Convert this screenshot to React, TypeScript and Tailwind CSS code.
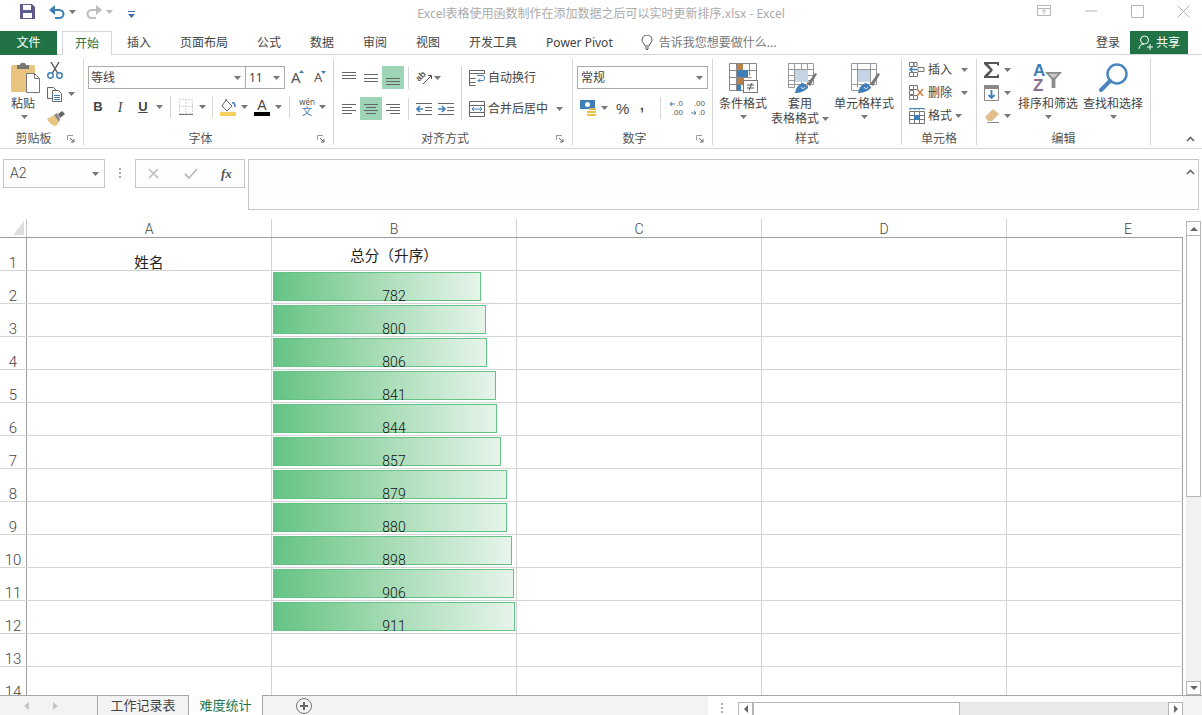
const scores = [782, 800, 806, 841, 844, 857, 879, 880, 898, 906, 911];
const rows = Array.from({ length: 14 }, (_, i) => i + 1);

function Caret({ className = "" }: { className?: string }) {
  return (
    <svg className={`shrink-0 ${className}`} width="7" height="4" viewBox="0 0 7 4">
      <path d="M0 0h7L3.5 4z" fill="#777" />
    </svg>
  );
}

function Launcher() {
  return (
    <svg width="8" height="8" viewBox="0 0 8 8" fill="none">
      <path d="M.5 5V.5H6" stroke="#999" />
      <path d="M3 3l4 4M7 4v3H4" stroke="#666" />
    </svg>
  );
}

function Sep({ className = "h-[22px]" }: { className?: string }) {
  return <div className={`w-px shrink-0 bg-[#d6d6d6] ${className}`} />;
}

function Group({
  w,
  label,
  launcher,
  children,
}: {
  w: string;
  label: string;
  launcher?: boolean;
  children: React.ReactNode;
}) {
  return (
    <div className={`${w} flex h-[86px] shrink-0 flex-col border-r border-[#d6d6d6]`}>
      <div className="h-[74px]">{children}</div>
      <div className="flex h-[12px] items-center">
        <span className="flex-1 text-center text-xs leading-none text-[#555]">{label}</span>
        {launcher && (
          <span className="flex w-[16px] justify-start">
            <Launcher />
          </span>
        )}
      </div>
    </div>
  );
}

function Lines({ ys, x }: { ys: number[]; x: [number, number][] }) {
  return (
    <svg width="14" height="14" viewBox="0 0 14 14" stroke="#666">
      {ys.map((y, i) => (
        <path key={y} d={`M${x[i][0]} ${y + 0.5}H${x[i][1]}`} />
      ))}
    </svg>
  );
}

function AlignBox({ on, children }: { on?: boolean; children: React.ReactNode }) {
  return (
    <div className={`flex h-[23px] w-[22px] items-center justify-center ${on ? "bg-[#9fd5b7]" : ""}`}>
      {children}
    </div>
  );
}

function Indent({ flip }: { flip?: boolean }) {
  return (
    <svg width="16" height="12" viewBox="0 0 16 12" fill="none">
      <path d={flip ? "M0 6h6M4 3l3 3-3 3" : "M7 6H1M4 3L1 6l3 3"} stroke="#3f7fb8" strokeWidth="1.6" />
      <path d="M0 .5h16M9 4.500h7M9 7.500h7M0 11.500h16" stroke="#666" />
    </svg>
  );
}

function CondIcon() {
  return (
    <svg width="29" height="30" viewBox="0 0 29 30" fill="none">
      <path d="M.5 .5h27v21H.5zM.5 7.500h27M.5 14.500h22M.5 21.500v6h14M7.500 .5v27M20.500 .5v12" stroke="#888" />
      <path d="M8 1h6v6H8zM8 15h7v6H8z" fill="#b8814c" />
      <path d="M8 7h11v7H8zM8 22h4v6H8z" fill="#3f7fb8" />
      <rect x="14.500" y="17.500" width="14" height="12" fill="#fff" stroke="#777" />
      <path d="M18 22h7M18 25h7M23 20l-3 7.500" stroke="#555" />
    </svg>
  );
}

function TableIcon({ wide, className = "" }: { wide?: boolean; className?: string }) {
  return (
    <svg className={className} width="30" height="30" viewBox="0 0 30 30" fill="none">
      <path d="M.5 .5h25v21H.5zM.5 6.500h25" stroke="#999" />
      {!wide && <path d="M.5 12.500h25M.5 17.500h25M6.500 .5v24h-6V20M13.500 .5v24M19.500 .5v24" stroke="#999" />}
      {wide && <path d="M.5 21.500v6h8M6.500 .5v24M19.500 .5v21" stroke="#999" />}
      <path d={wide ? "M7 7h12v12H7z" : "M7 7h13v12H7z"} fill="#c5d5e3" />
      <path d="M19 21l8-11 2 1-7 12z" fill="#777" />
      <path d="M7 30c1-6 4-9 8-10 4 2 5 4 5 5-4 4-9 5-13 5z" fill="#3f7fb8" />
      <path d="M13 24c1 2 3 2 4 0" stroke="#fff" />
    </svg>
  );
}

function BigButton({
  icon,
  lines,
  caretInline,
  className,
}: {
  icon: React.ReactNode;
  lines: string[];
  caretInline?: boolean;
  className: string;
}) {
  return (
    <div className={`flex flex-col items-center ${className}`}>
      <div className="flex h-[37px] items-start justify-center pt-[4px]">{icon}</div>
      {lines.map((t, i) => (
        <div key={t} className="flex items-center whitespace-nowrap text-xs leading-[15px] text-[#444]">
          {t}
          {caretInline && i === lines.length - 1 && <Caret className="ml-[3px]" />}
        </div>
      ))}
      {!caretInline && <Caret className="mt-[4px]" />}
    </div>
  );
}

function CellRow({ icon, label, caretClass }: { icon: React.ReactNode; label: string; caretClass: string }) {
  return (
    <div className="flex h-[23px] items-center">
      <span className="flex w-[16px] justify-center">{icon}</span>
      <span className="ml-[3px] whitespace-nowrap text-xs text-[#444]">{label}</span>
      <Caret className={caretClass} />
    </div>
  );
}

function Ribbon() {
  return (
    <div className="flex h-[94px] border-b border-[#d6d6d6] pt-[4px]">
      <Group w="w-[84px]" label="剪贴板" launcher>
        <div className="flex">
          <div className="ml-[11px] flex w-[36px] flex-col">
            <svg className="mt-[3px]" width="29" height="31" viewBox="0 0 29 31" fill="none">
              <rect y="3" width="24" height="27" rx="1.500" fill="#e8c47f" />
              <path d="M6 3h3c0-3 6-3 6 0h3v4H6z" fill="#777" />
              <path d="M15.500 11.500h8l5 5v14h-13z" fill="#fff" stroke="#777" />
              <path d="M23.500 11.500v5h5" stroke="#777" />
            </svg>
            <span className="mt-[3px] whitespace-nowrap text-xs leading-[15px] text-[#444]">粘贴</span>
            <Caret className="ml-[10px] mt-[4px]" />
          </div>
          <div className="-mt-[1px] flex flex-col">
            <div className="flex h-[24px] items-center">
              <svg width="16" height="17" viewBox="0 0 16 17" fill="none">
                <path d="M4 0l6.500 11M12 0L5.500 11" stroke="#555" strokeWidth="1.400" />
                <circle cx="3.500" cy="13.500" r="2.700" stroke="#3f7fb8" strokeWidth="1.500" />
                <circle cx="12.500" cy="13.500" r="2.700" stroke="#3f7fb8" strokeWidth="1.500" />
              </svg>
            </div>
            <div className="flex h-[24px] items-center">
              <svg width="16" height="16" viewBox="0 0 16 16" fill="none">
                <path d="M5 12.500H.5v-11h6l3 3" stroke="#666" />
                <path d="M5.500 4.500h6l3 3v8h-9z" fill="#fff" stroke="#666" />
                <path d="M7 9.500h6M7 11.500h6M7 13.500h6" stroke="#3f7fb8" />
              </svg>
              <Caret className="ml-[5px]" />
            </div>
            <div className="flex h-[24px] items-center">
              <svg width="18" height="15" viewBox="0 0 18 15">
                <path d="M0 8l7-4 5 7-3 4C6 15 2 12 0 8z" fill="#e8c47f" />
                <path d="M7 4l3-2 3 6-1 3z" fill="#888" />
                <path d="M11 3l4-3 3 3-5 4z" fill="#666" />
              </svg>
            </div>
          </div>
        </div>
      </Group>

      <Group w="w-[250px]" label="字体" launcher>
        <div className="pl-[4px] pt-[7px]">
          <div className="flex h-[23px] items-center">
            <div className="flex h-full w-[158px] items-center justify-between border border-[#ababab] pl-[2px] pr-[4px] text-xs text-[#444]">
              等线
              <Caret />
            </div>
            <div className="-ml-px flex h-full w-[40px] items-center justify-between border border-[#ababab] pl-[3px] pr-[4px] text-xs text-[#444]">
              11
              <Caret />
            </div>
            <div className="ml-[6px] flex w-[14px] items-start text-[15px] leading-none text-[#555]">
              A
              <svg width="5" height="3" viewBox="0 0 5 3" className="-ml-[2px]">
                <path d="M0 3h5L2.500 0z" fill="#3f7fb8" />
              </svg>
            </div>
            <div className="ml-[9px] flex w-[14px] items-start text-[13px] leading-none text-[#555]">
              A
              <svg width="5" height="3" viewBox="0 0 5 3" className="-ml-px">
                <path d="M0 0h5L2.500 3z" fill="#3f7fb8" />
              </svg>
            </div>
          </div>
          <div className="mt-[7px] flex h-[22px] items-center text-[#444]">
            <span className="w-[20px] text-center font-['Liberation_Sans',sans-serif] text-[13px] font-bold">B</span>
            <span className="w-[24px] text-center font-['Liberation_Serif',serif] text-[14px] italic">I</span>
            <span className="w-[22px] text-center font-['Liberation_Sans',sans-serif] text-[13px] font-bold underline">U</span>
            <Caret className="ml-[2px]" />
            <Sep className="ml-[7px] h-[22px]" />
            <svg className="ml-[7px]" width="16" height="16" viewBox="0 0 16 16" fill="none">
              <path d="M1.500 .5h13v14h-13zM8 .5v14M1.500 7.500h13" stroke="#aaa" strokeDasharray="1 2" />
              <path d="M1 15.500h14" stroke="#777" />
            </svg>
            <Caret className="ml-[5px]" />
            <Sep className="ml-[6px] h-[22px]" />
            <div className="ml-[7px] flex w-[16px] flex-col items-center">
              <svg width="16" height="13" viewBox="0 0 16 13" fill="none">
                <path d="M6 1l6 6-5 5-5-5z" fill="#fff" stroke="#666" />
                <path d="M6 1V0M12 4c2-1 3 1 3 4" stroke="#3f7fb8" strokeWidth="1.500" />
              </svg>
              <div className="h-[4px] w-[16px] bg-[#f5d05f]" />
            </div>
            <Caret className="ml-[5px]" />
            <div className="ml-[6px] flex w-[16px] flex-col items-center">
              <span className="h-[13px] font-['Liberation_Sans',sans-serif] text-[14px] leading-[13px]">A</span>
              <div className="h-[4px] w-[16px] bg-black" />
            </div>
            <Caret className="ml-[5px]" />
            <Sep className="ml-[7px] h-[22px]" />
            <div className="ml-[8px] flex w-[18px] flex-col items-center leading-none">
              <span className="text-[8px] text-[#555]">wén</span>
              <span className="text-[10px] text-[#3f7fb8]">文</span>
            </div>
            <Caret className="ml-[3px]" />
          </div>
        </div>
      </Group>

      <Group w="w-[239px]" label="对齐方式" launcher>
        <div className="flex pl-[4px] pt-[7px]">
          <div className="w-[123px]">
            <div className="flex h-[23px] items-center">
              <AlignBox>
                <Lines ys={[1, 4, 7]} x={[[0, 14], [0, 14], [0, 14]]} />
              </AlignBox>
              <AlignBox>
                <Lines ys={[3, 7, 10]} x={[[0, 14], [0, 14], [0, 14]]} />
              </AlignBox>
              <AlignBox on>
                <Lines ys={[7, 10, 13]} x={[[0, 14], [0, 14], [0, 14]]} />
              </AlignBox>
              <Sep className="ml-[4px] h-[22px]" />
              <svg className="ml-[7px]" width="16" height="16" viewBox="0 0 16 16" fill="none">
                <text
                  x="0"
                  y="9"
                  transform="rotate(-45 5 7)"
                  fontSize="9"
                  fontFamily="Liberation Sans, sans-serif"
                  fontWeight="bold"
                  fill="#555"
                >
                  ab
                </text>
                <path d="M7 14l8-8M12 5.500h3.500V9" stroke="#555" />
              </svg>
              <Caret className="ml-[2px]" />
            </div>
            <div className="mt-[8px] flex h-[23px] items-center">
              <AlignBox>
                <Lines ys={[2, 5, 8, 11]} x={[[0, 14], [0, 10], [0, 14], [0, 10]]} />
              </AlignBox>
              <AlignBox on>
                <Lines ys={[2, 5, 8, 11]} x={[[0, 14], [2, 12], [0, 14], [2, 12]]} />
              </AlignBox>
              <AlignBox>
                <Lines ys={[2, 5, 8, 11]} x={[[0, 14], [4, 14], [0, 14], [4, 14]]} />
              </AlignBox>
              <Sep className="ml-[4px] h-[22px]" />
              <span className="ml-[7px]">
                <Indent />
              </span>
              <span className="ml-[6px]">
                <Indent flip />
              </span>
            </div>
          </div>
          <Sep className="h-[54px]" />
          <div className="ml-[7px]">
            <div className="flex h-[23px] items-center text-xs text-[#444]">
              <svg className="mr-[3px]" width="16" height="16" viewBox="0 0 16 16" fill="none">
                <path d="M.5 .5h15v3H.5zM.5 3.500v12h6M.5 8.500h6M.5 12.500h6" stroke="#666" />
                <path d="M8 5.500h6c2 0 2 5 0 5H9M11 8.500l-2 2 2 2" stroke="#3f7fb8" />
              </svg>
              自动换行
            </div>
            <div className="mt-[8px] flex h-[23px] items-center text-xs text-[#444]">
              <svg className="mr-[3px]" width="16" height="16" viewBox="0 0 16 16" fill="none">
                <path d="M.5 .5h15v15H.5zM.5 4.500h15M.5 11.500h15" stroke="#666" />
                <path d="M3 8h10M5 6L3 8l2 2M11 6l2 2-2 2" stroke="#3f7fb8" />
              </svg>
              合并后居中
              <Caret className="ml-[8px]" />
            </div>
          </div>
        </div>
      </Group>

      <Group w="w-[140px]" label="数字" launcher>
        <div className="pt-[7px]">
          <div className="ml-[4px] flex h-[23px] w-[131px] items-center justify-between border border-[#ababab] pl-[3px] pr-[4px] text-xs text-[#444]">
            常规
            <Caret />
          </div>
          <div className="mt-[8px] flex h-[22px] items-center text-[#444]">
            <svg className="ml-[7px]" width="17" height="17" viewBox="0 0 17 17" fill="none">
              <path d="M0 0h15v9H0z" fill="#3f7fb8" />
              <circle cx="7.500" cy="4.500" r="2.500" fill="#fff" />
              <path d="M7 11h9v2H7zM7 14h9v2H7z" fill="#f0c04f" />
              <path d="M9 8h7v2H9z" fill="#e3b54f" />
            </svg>
            <Caret className="ml-[4px]" />
            <span className="ml-[8px] w-[14px] font-['Liberation_Sans',sans-serif] text-[15px] leading-none">%</span>
            <span className="-mt-[7px] ml-[10px] w-[6px] font-['Liberation_Sans',sans-serif] text-[14px] font-bold leading-none">,</span>
            <Sep className="ml-[14px] h-[22px]" />
            <div className="ml-[6px] flex h-[18px] w-[16px] flex-col items-end font-['Liberation_Sans',sans-serif] text-[8px] leading-[9px] text-[#555]">
              <span className="flex items-center">
                <svg className="mr-px" width="6" height="6" viewBox="0 0 6 6" fill="none">
                  <path d="M6 3H1M3 1L1 3l2 2" stroke="#3f7fb8" />
                </svg>
                .0
              </span>
              <span>.00</span>
            </div>
            <div className="ml-[6px] flex h-[18px] w-[16px] flex-col items-end font-['Liberation_Sans',sans-serif] text-[8px] leading-[9px] text-[#555]">
              <span>.00</span>
              <span className="flex items-center">
                <svg className="mr-px" width="6" height="6" viewBox="0 0 6 6" fill="none">
                  <path d="M0 3h5M3 1l2 2-2 2" stroke="#3f7fb8" />
                </svg>
                .0
              </span>
            </div>
          </div>
        </div>
      </Group>

      <Group w="w-[189px]" label="样式">
        <div className="flex pl-[6px]">
          <BigButton className="w-[48px]" icon={<CondIcon />} lines={["条件格式"]} />
          <BigButton
            className="ml-[5px] w-[56px]"
            icon={<TableIcon className="ml-[5px]" />}
            lines={["套用", "表格格式"]}
            caretInline
          />
          <BigButton className="ml-[6px] w-[60px]" icon={<TableIcon wide className="ml-[4px]" />} lines={["单元格样式"]} />
        </div>
      </Group>

      <Group w="w-[75px]" label="单元格">
        <div className="-mt-px pl-[7px]">
          <CellRow
            label="插入"
            caretClass="ml-[9px]"
            icon={
              <svg width="16" height="15" viewBox="0 0 16 15" fill="none">
                <path d="M.5 .5h4v4h-4zM5 .5h3v4H5zM.5 10.500h4v4h-4zM4.500 10.500h4v4h-4zM9 5.500h6v4H9z" stroke="#777" />
                <path d="M8 7.500H1M3.500 5L1 7.500 3.500 10" stroke="#3f7fb8" strokeWidth="1.400" />
              </svg>
            }
          />
          <CellRow
            label="删除"
            caretClass="ml-[9px]"
            icon={
              <svg width="16" height="15" viewBox="0 0 16 15" fill="none">
                <path d="M.5 .5h4v4h-4zM.5 5.500h4v4h-4zM.5 10.500h4v4h-4zM4.500 10.500h4v4h-4zM4.500 .5h4v4h-4z" stroke="#777" />
                <path d="M8 4l6 7M14 4l-6 7" stroke="#c9823f" strokeWidth="1.500" />
              </svg>
            }
          />
          <CellRow
            label="格式"
            caretClass="ml-[3px]"
            icon={
              <svg width="16" height="16" viewBox="0 0 16 16" fill="none">
                <path d="M1 .5h14M1 0v2M15 0v2M6 0v2M10 0v2" stroke="#3f7fb8" />
                <path d="M.5 3.500h15v12H.5zM.5 7.500h15M.5 11.500h15M5.500 3.500v12M10.500 3.500v12" stroke="#777" />
                <path d="M5 7h6v5H5z" fill="#3f7fb8" />
              </svg>
            }
          />
        </div>
      </Group>

      <Group w="w-[174px]" label="编辑">
        <div className="flex pl-[7px]">
          <div className="-mt-px w-[34px]">
            <div className="flex h-[23px] items-center">
              <svg width="16" height="16" viewBox="0 0 16 16">
                <path d="M0 0h15v3.500h-2V2H4l5 6-5 6h9v-1.500h2V16H0v-2l6-6-6-6z" fill="#555" />
              </svg>
              <Caret className="ml-[4px]" />
            </div>
            <div className="flex h-[23px] items-center">
              <svg width="16" height="16" viewBox="0 0 16 16" fill="none">
                <path d="M.5 .5h14v15H.5z" stroke="#888" />
                <path d="M1 1h13v3H1z" fill="#888" />
                <path d="M7.500 5v8M4.500 10l3 3 3-3" stroke="#3f7fb8" strokeWidth="1.800" />
              </svg>
              <Caret className="ml-[4px]" />
            </div>
            <div className="flex h-[23px] items-center">
              <svg width="16" height="14" viewBox="0 0 16 14">
                <path d="M1 8l8-8 6 5-7 7H4z" fill="#e3bd8d" />
                <path d="M3 13.500h12" stroke="#888" />
              </svg>
              <Caret className="ml-[4px]" />
            </div>
          </div>
          <BigButton
            className="w-[60px]"
            lines={["排序和筛选"]}
            icon={
              <div className="flex w-[30px] items-center">
                <div className="flex flex-col font-['Liberation_Sans',sans-serif] text-[17px] font-bold leading-[15px]">
                  <span className="text-[#3f7fb8]">A</span>
                  <span className="text-[#8a6d8e]">Z</span>
                </div>
                <svg className="mt-[4px] shrink-0" width="17" height="18" viewBox="0 0 18 17">
                  <path d="M0 0h18l-7 8v9H7V8z" fill="#8c8c8c" />
                  <path d="M4 2h10l-4 4H8z" fill="#c8c8c8" />
                </svg>
              </div>
            }
          />
          <BigButton
            className="ml-[5px] w-[60px]"
            lines={["查找和选择"]}
            icon={
              <svg width="29" height="29" viewBox="0 0 29 29" fill="none">
                <circle cx="18" cy="11" r="9.500" stroke="#4a86bd" strokeWidth="2.500" />
                <path d="M11 18L2 27" stroke="#4a86bd" strokeWidth="4" strokeLinecap="round" />
              </svg>
            }
          />
        </div>
      </Group>

      <div className="flex h-[86px] flex-1 items-end justify-end pb-[3px] pr-[7px]">
        <svg width="9" height="6" viewBox="0 0 9 6" fill="none">
          <path d="M1 5l3.500-3.500L8 5" stroke="#666" strokeWidth="1.600" />
        </svg>
      </div>
    </div>
  );
}

function Cell({ w = "w-[245px]", children }: { w?: string; children?: React.ReactNode }) {
  return <div className={`${w} shrink-0 border-r border-[#d4d4d4]`}>{children}</div>;
}

function Sheet() {
  return (
    <div className="w-[1183px] shrink-0 overflow-hidden">
      <div className="flex h-[19px] border-b border-[#9e9e9e] font-['Roboto',sans-serif] text-[14px] font-light leading-[20px] text-[#444]">
        <div className="flex w-[27px] shrink-0 items-end justify-end border-r border-[#c8c8c8] pb-[2px] pr-[2px]">
          <svg width="11" height="14" viewBox="0 0 11 14">
            <path d="M0 14L11 0v14z" fill="#dfdfdf" />
          </svg>
        </div>
        {["A", "B", "C", "D"].map((c) => (
          <div key={c} className="w-[245px] shrink-0 border-r border-[#d4d4d4] text-center">
            {c}
          </div>
        ))}
        <div className="w-[175px] shrink-0 pl-[117px]">E</div>
      </div>
      {rows.map((r) => {
        const score = scores[r - 2];
        return (
          <div key={r} className="flex h-[33px] border-b border-[#d4d4d4]">
            <div className="flex w-[27px] shrink-0 items-end justify-center border-r border-[#9e9e9e] font-['Roboto',sans-serif] text-[15px] font-light leading-[14px] text-[#444]">
              {r}
            </div>
            <Cell>
              {r === 1 && (
                <div className="flex h-full items-end justify-center text-[14.670px] leading-[16px] text-[#222]">姓名</div>
              )}
            </Cell>
            <Cell>
              {r === 1 && <div className="pt-[7px] text-center text-[14.670px] leading-[20px] text-[#222]">总分（升序）</div>}
              {score && (
                <div className="grid h-full">
                  <div
                    className="col-start-1 row-start-1 ml-px mt-px h-[29px] border border-[#63c384] bg-gradient-to-r from-[#63c384] to-[#e6f4ea]"
                    style={{ width: Math.round(score * 0.2657) }}
                  />
                  <div className="col-start-1 row-start-1 flex items-end justify-center font-['Roboto',sans-serif] text-[14px] font-light leading-[13px] text-[#111]">
                    {score}
                  </div>
                </div>
              )}
            </Cell>
            <Cell />
            <Cell />
            <div className="w-[176px] shrink-0 border-r border-[#9e9e9e]" />
          </div>
        );
      })}
    </div>
  );
}

function ScrollBtn({ d, className = "" }: { d: string; className?: string }) {
  return (
    <div className={`flex shrink-0 items-center justify-center border border-[#b5b5b5] bg-white ${className}`}>
      <svg width="8" height="8" viewBox="0 0 8 8">
        <path d={d} fill="#666" />
      </svg>
    </div>
  );
}

export default function App() {
  return (
    <div className="flex h-[715px] w-[1202px] flex-col overflow-hidden bg-white font-['Noto_Sans','Noto_Sans_CJK_SC',sans-serif]">
      {/* title bar */}
      <div className="grid h-[31px] shrink-0 grid-cols-[1fr_auto_1fr] items-start">
        <div className="flex items-center pl-[20px] pt-[4px]">
          <svg width="15" height="15" viewBox="0 0 15 15">
            <path d="M0 0h12l3 3v12H0z" fill="#5d5b8d" />
            <path d="M3 1h8v5H3zM3 9h9v5H3z" fill="#fff" />
          </svg>
          <svg className="ml-[14px]" width="16" height="14" viewBox="0 0 16 14" fill="none">
            <path d="M5 5h5c6 0 6 8 0 8H6" stroke="#3f7fb8" strokeWidth="2" />
            <path d="M0 5l6-5v10z" fill="#3f7fb8" />
          </svg>
          <Caret className="ml-[4px]" />
          <svg className="ml-[10px]" width="16" height="14" viewBox="0 0 16 14" fill="none">
            <path d="M11 5H6c-6 0-6 8 0 8h4" stroke="#bdbdbd" strokeWidth="2" />
            <path d="M16 5l-6-5v10z" fill="#bdbdbd" />
          </svg>
          <Caret className="ml-[4px] opacity-50" />
          <svg className="ml-[15px] mt-[6px]" width="7" height="7" viewBox="0 0 7 7">
            <path d="M0 0h7v1H0zM0 3h7L3.500 7z" fill="#3f6fa5" />
          </svg>
        </div>
        <div className="pt-[5px] text-xs leading-[18px] text-[#aaa]">
          Excel表格使用函数制作在添加数据之后可以实时更新排序.xlsx - Excel
        </div>
        <div className="flex items-start justify-end pr-[12px] pt-[5px]">
          <svg width="14" height="12" viewBox="0 0 14 12" fill="none">
            <path d="M.5 .5h13v10H.5zM.5 3.500h13M7 9V5M5 6.500L7 4.500l2 2" stroke="#b5b5b5" />
          </svg>
          <svg className="ml-[34px]" width="12" height="12" viewBox="0 0 12 12">
            <path d="M0 6h12" stroke="#b5b5b5" />
          </svg>
          <svg className="ml-[34px]" width="13" height="13" viewBox="0 0 13 13" fill="none">
            <path d="M.5 .5h12v12H.5z" stroke="#b5b5b5" />
          </svg>
          <svg className="ml-[33px]" width="13" height="13" viewBox="0 0 13 13" fill="none">
            <path d="M.5 .5l12 12M12.500 .5l-12 12" stroke="#b5b5b5" />
          </svg>
        </div>
      </div>

      {/* tabs */}
      <div className="flex h-[24px] shrink-0 border-b border-[#d6d6d6] text-xs text-[#444]">
        <div className="flex h-[24px] w-[57px] items-center justify-center bg-[#217346] text-white">文件</div>
        <div className="ml-[5px] flex h-[24px] w-[50px] items-center justify-center border border-b-0 border-[#d6d6d6] bg-white text-[#217346]">
          开始
        </div>
        <div className="ml-[15px] flex items-center gap-[29px] whitespace-nowrap">
          <span>插入</span>
          <span>页面布局</span>
          <span>公式</span>
          <span>数据</span>
          <span>审阅</span>
          <span>视图</span>
          <span>开发工具</span>
          <span>Power Pivot</span>
        </div>
        <div className="ml-[28px] flex items-center whitespace-nowrap text-[#777]">
          <svg width="12" height="15" viewBox="0 0 12 15" fill="none">
            <path d="M4 11C3 8 1 7.500 1 5a5 5 0 0 1 10 0c0 2.500-2 3-3 6zM4 13h4M5 14.500h2" stroke="#555" />
          </svg>
          <span className="ml-[6px]">告诉我您想要做什么...</span>
        </div>
        <div className="ml-auto flex items-center pr-[14px]">
          <span>登录</span>
          <div className="ml-[10px] flex h-[23px] w-[58px] items-center justify-center bg-[#217346] text-white">
            <svg width="15" height="15" viewBox="0 0 15 15" fill="none">
              <circle cx="6.500" cy="5" r="4" stroke="#fff" />
              <path d="M1 14c0-3 2-5 5-5M9 12h6M12 9v6" stroke="#fff" />
            </svg>
            <span className="ml-[3px]">共享</span>
          </div>
        </div>
      </div>

      <Ribbon />

      {/* formula bar */}
      <div className="flex h-[70px] shrink-0 items-start pl-[3px] pr-[3px] pt-[10px]">
        <div className="flex h-[29px] w-[102px] items-center justify-between border border-[#c6c6c6] bg-[#fdfefd] pl-[6px] pr-[5px] font-['Roboto',sans-serif] text-[14px] font-light text-[#444]">
          A2
          <Caret />
        </div>
        <div className="flex h-[29px] w-[30px] items-center justify-center">
          <svg width="3" height="11" viewBox="0 0 3 11">
            <path d="M0 0h2v2H0zM0 4h2v2H0zM0 8h2v2H0z" fill="#aaa" />
          </svg>
        </div>
        <div className="flex h-[29px] w-[110px] items-center border border-[#c6c6c6] bg-[#fdfefd]">
          <svg className="ml-[12px]" width="11" height="11" viewBox="0 0 11 11" fill="none">
            <path d="M1 1l9 9M10 1l-9 9" stroke="#bbb" strokeWidth="1.500" />
          </svg>
          <svg className="ml-[25px]" width="14" height="11" viewBox="0 0 14 11" fill="none">
            <path d="M1 6l4 4 8-9" stroke="#bbb" strokeWidth="1.800" />
          </svg>
          <span className="ml-[23px] font-['Liberation_Serif',serif] text-[13px] font-bold italic text-[#555]">fx</span>
        </div>
        <div className="ml-[3px] flex h-[51px] flex-1 justify-end border border-[#c6c6c6] bg-[#fdfefd] pr-[3px] pt-[9px]">
          <svg width="9" height="6" viewBox="0 0 9 6" fill="none">
            <path d="M1 5l3.500-3.500L8 5" stroke="#666" strokeWidth="1.600" />
          </svg>
        </div>
      </div>

      {/* sheet */}
      <div className="flex h-[476px] shrink-0">
        <Sheet />
        <div className="ml-[3px] mt-[2px] flex w-[15px] flex-col bg-[#f1f1f1]">
          <ScrollBtn d="M0 6h8L4 2z" className="h-[15px]" />
          <div className="h-[261px] border border-t-0 border-[#b5b5b5] bg-white" />
          <div className="flex-1" />
          <ScrollBtn d="M0 2h8L4 6z" className="h-[14px]" />
        </div>
      </div>

      {/* sheet tabs */}
      <div className="flex h-[20px] shrink-0 border-t border-[#a6a6a6] bg-[#f3f3f3] text-[13px] text-[#444]">
        <div className="flex w-[98px] items-center border-r border-[#a6a6a6] pl-[24px]">
          <svg width="5" height="8" viewBox="0 0 5 8">
            <path d="M5 0v8L0 4z" fill="#c6c6c6" />
          </svg>
          <svg className="ml-[24px]" width="5" height="8" viewBox="0 0 5 8">
            <path d="M0 0v8l5-4z" fill="#c6c6c6" />
          </svg>
        </div>
        <div className="flex w-[90px] items-center justify-center whitespace-nowrap pt-px">工作记录表</div>
        <div className="-mt-px flex h-[20px] w-[75px] items-center justify-center whitespace-nowrap border-x border-[#a6a6a6] bg-white pt-px text-[#217346]">
          难度统计
        </div>
        <svg className="ml-[33px] mt-[2px]" width="16" height="16" viewBox="0 0 16 16" fill="none">
          <circle cx="8" cy="8" r="7.500" stroke="#777" />
          <path d="M8 4v8M4 8h8" stroke="#666" strokeWidth="2" />
        </svg>
        <div className="ml-[396px] flex h-[19px] w-[28px] items-end justify-center bg-white pb-[1px]">
          <svg width="3" height="11" viewBox="0 0 3 11">
            <path d="M0 0h2v2H0zM0 4h2v2H0zM0 8h2v2H0z" fill="#aaa" />
          </svg>
        </div>
        <div className="flex w-[447px] flex-col bg-white pl-[2px]">
          <div className="h-[6px]" />
          <div className="flex h-[13px] bg-[#e9e9e9]">
            <ScrollBtn d="M6 0v8L2 4z" className="w-[15px] border-b-0" />
            <div className="w-[207px] border-x border-t border-[#b5b5b5] bg-white" />
            <div className="flex-1" />
            <ScrollBtn d="M2 0v8l4-4z" className="w-[15px] border-b-0" />
          </div>
        </div>
      </div>
    </div>
  );
}
